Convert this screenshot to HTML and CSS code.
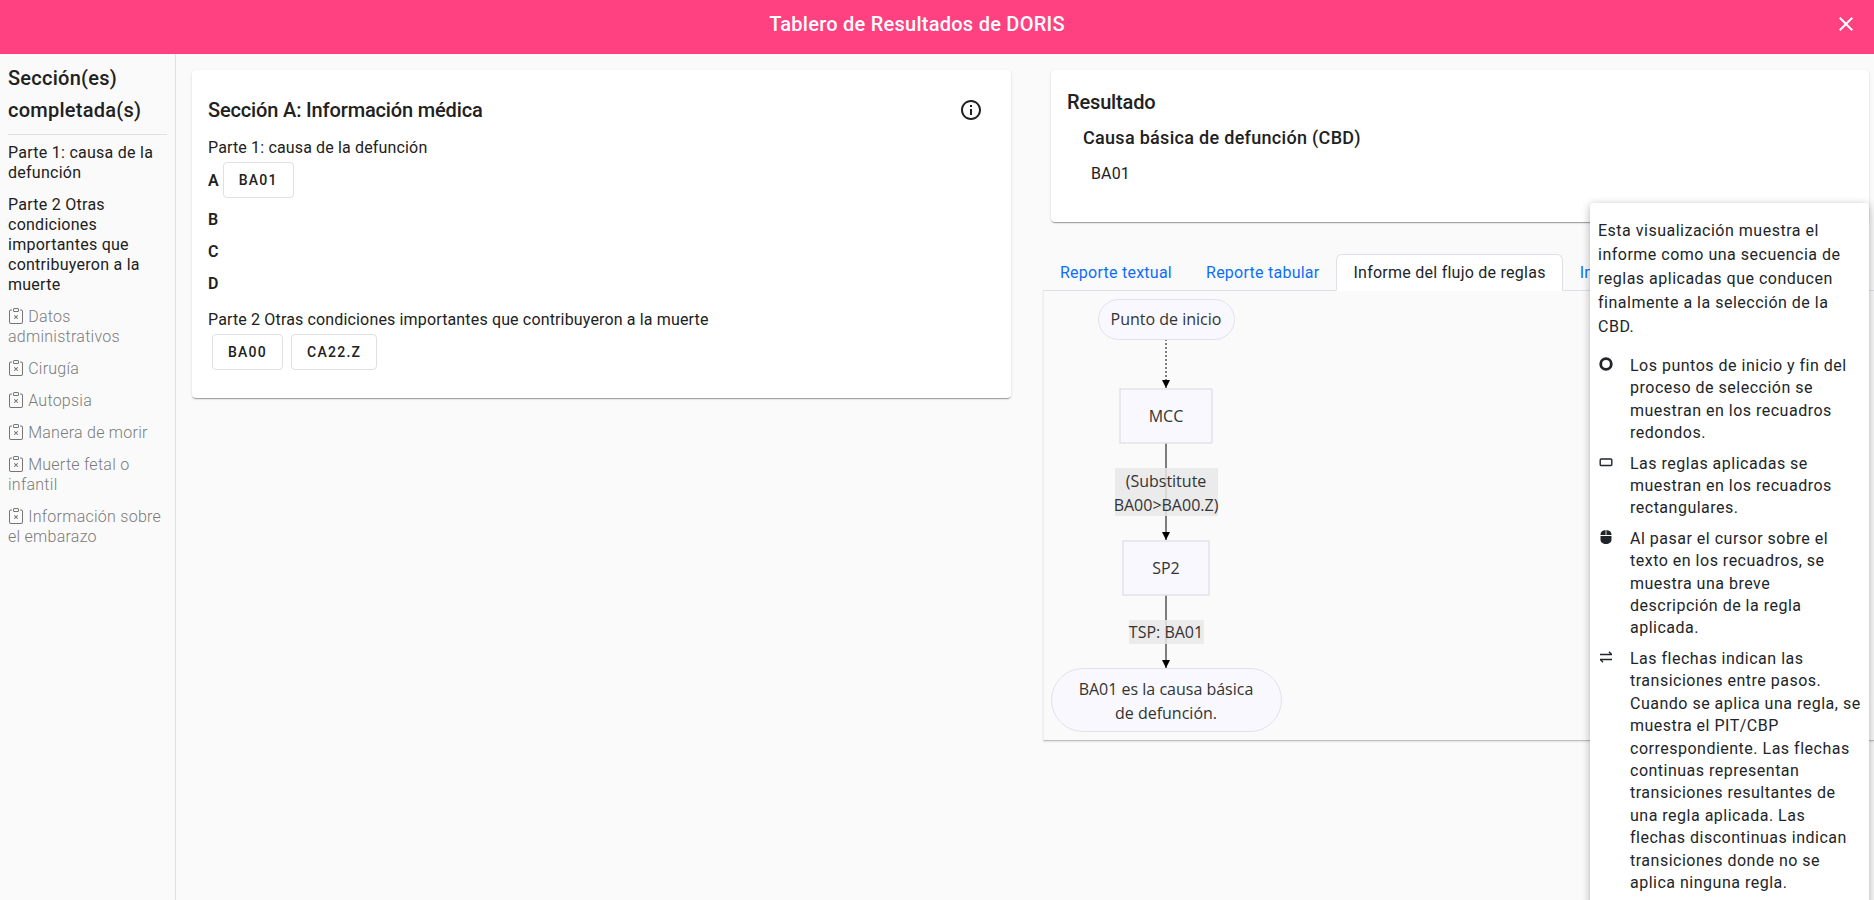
FILE: index.html
```html
<!DOCTYPE html>
<html lang="es">
<head>
  <meta charset="UTF-8">
  <title>Tablero de Resultados de DORIS</title>
  <link rel="stylesheet" href="styles.css">
</head>
<body>
  <!-- Top bar -->
  <header class="top-bar">
    <h1>Tablero de Resultados de DORIS</h1>
    <svg class="close-icon" viewBox="0 0 24 24" width="24" height="24"><path d="M19 6.41 17.59 5 12 10.59 6.41 5 5 6.41 10.59 12 5 17.59 6.41 19 12 13.41 17.59 19 19 17.59 13.41 12z"/></svg>
  </header>

  <div class="main-container">
    <!-- Sections list -->
    <aside class="sidebar">
      <h2>Sección(es) completada(s)</h2>
      <hr>
      <p class="side-item">Parte 1: causa de la defunción</p>
      <p class="side-item">Parte 2 Otras condiciones importantes que contribuyeron a la muerte</p>
      <p class="side-item missing"><svg class="clip" viewBox="0 0 16 16" width="16" height="16"><use href="#clipboard-x"/></svg> Datos administrativos</p>
      <p class="side-item missing"><svg class="clip" viewBox="0 0 16 16" width="16" height="16"><use href="#clipboard-x"/></svg> Cirugía</p>
      <p class="side-item missing"><svg class="clip" viewBox="0 0 16 16" width="16" height="16"><use href="#clipboard-x"/></svg> Autopsia</p>
      <p class="side-item missing"><svg class="clip" viewBox="0 0 16 16" width="16" height="16"><use href="#clipboard-x"/></svg> Manera de morir</p>
      <p class="side-item missing"><svg class="clip" viewBox="0 0 16 16" width="16" height="16"><use href="#clipboard-x"/></svg> Muerte fetal o infantil</p>
      <p class="side-item missing"><svg class="clip" viewBox="0 0 16 16" width="16" height="16"><use href="#clipboard-x"/></svg> Información sobre el embarazo</p>
    </aside>

    <main class="content">
      <!-- Left column -->
      <section class="card medical-card">
        <div class="card-head">
          <h3>Sección A: Información médica</h3>
          <svg class="info-icon" viewBox="0 0 24 24" width="24" height="24"><path d="M11 7h2v2h-2zm0 4h2v6h-2zm1-9C6.48 2 2 6.48 2 12s4.48 10 10 10 10-4.48 10-10S17.52 2 12 2zm0 18c-4.41 0-8-3.59-8-8s3.59-8 8-8 8 3.59 8 8-3.59 8-8 8z"/></svg>
        </div>
        <p class="part-title">Parte 1: causa de la defunción</p>
        <div class="cause-row first"><b>A</b><span class="chip">BA01</span></div>
        <div class="cause-row"><b>B</b></div>
        <div class="cause-row"><b>C</b></div>
        <div class="cause-row"><b>D</b></div>
        <p class="part-title second">Parte 2 Otras condiciones importantes que contribuyeron a la muerte</p>
        <div class="chip-row"><span class="chip">BA00</span><span class="chip">CA22.Z</span></div>
      </section>

      <!-- Right column -->
      <div class="result-col">
        <section class="card result-card">
          <h3>Resultado</h3>
          <h4>Causa básica de defunción (CBD)</h4>
          <p>BA01</p>
        </section>

        <nav class="tabs">
          <a class="tab">Reporte textual</a>
          <a class="tab">Reporte tabular</a>
          <a class="tab active">Informe del flujo de reglas</a>
          <a class="tab">Informe</a>
        </nav>

        <div class="flow-panel">
          <svg class="flow" viewBox="0 0 300 449" width="300" height="449">
            <defs>
              <marker id="arrow" viewBox="0 0 8 8" refX="8" refY="4" markerWidth="8" markerHeight="8" orient="auto"><path d="M0 0 8 4 0 8z" fill="#000"/></marker>
            </defs>
            <line class="edge dotted" x1="123" y1="48" x2="123" y2="97" marker-end="url(#arrow)"/>
            <line class="edge" x1="123" y1="152" x2="123" y2="249" marker-end="url(#arrow)"/>
            <line class="edge" x1="123" y1="304" x2="123" y2="377" marker-end="url(#arrow)"/>

            <rect class="node" x="55.5" y="8.5" width="136" height="40" rx="20"/>
            <text x="123" y="34">Punto de inicio</text>

            <rect class="node thick" x="77" y="98" width="92" height="54"/>
            <text x="123" y="131">MCC</text>

            <rect class="edge-label" x="72" y="177" width="103" height="48"/>
            <text x="123" y="196">(Substitute</text>
            <text x="123" y="220">BA00&gt;BA00.Z)</text>

            <rect class="node thick" x="80" y="250" width="86" height="54"/>
            <text x="123" y="283">SP2</text>

            <rect class="edge-label" x="86" y="329" width="75" height="24"/>
            <text x="123" y="347">TSP: BA01</text>

            <rect class="node" x="8.5" y="377.5" width="230" height="63" rx="31.5"/>
            <text x="123" y="404">BA01 es la causa básica</text>
            <text x="123" y="428">de defunción.</text>
          </svg>
        </div>
      </div>
    </main>

    <!-- Help popup for the flow report -->
    <div class="help-pop">
      <p class="help-intro">Esta visualización muestra el informe como una secuencia de reglas aplicadas que conducen finalmente a la selección de la CBD.</p>
      <ul class="help-list">
        <li>
          <svg viewBox="0 0 16 16" width="16" height="16"><circle cx="8" cy="8" r="5.3" fill="none" stroke="#212529" stroke-width="2.8"/></svg>
          <span>Los puntos de inicio y fin del proceso de selección se muestran en los recuadros redondos.</span>
        </li>
        <li>
          <svg viewBox="0 0 16 16" width="16" height="16"><rect x="2.2" y="5" width="11.6" height="6.500" rx="1" fill="none" stroke="#212529" stroke-width="1.4"/></svg>
          <span>Las reglas aplicadas se muestran en los recuadros rectangulares.</span>
        </li>
        <li>
          <svg viewBox="0 0 16 16" width="16" height="16"><path d="M7.6 1C4.6 1.2 2.5 2.9 2.5 5.6v.4h5.1zM8.4 1v5h5.1v-.4C13.500 2.900 11.400 1.200 8.400 1zM2.500 7v3.500C2.500 13.300 4.900 15 8 15s5.500-1.700 5.500-4.500V7z" fill="#212529"/></svg>
          <span>Al pasar el cursor sobre el texto en los recuadros, se muestra una breve descripción de la regla aplicada.</span>
        </li>
        <li>
          <svg viewBox="0 0 16 16" width="16" height="16"><path d="M2 5.500h12M11 2.800l2.700 2.700M14 10.500H2M5 13.200 2.300 10.500" fill="none" stroke="#212529" stroke-width="1.400"/></svg>
          <span>Las flechas indican las transiciones entre pasos. Cuando se aplica una regla, se muestra el PIT/CBP correspondiente. Las flechas continuas representan transiciones resultantes de una regla aplicada. Las flechas discontinuas indican transiciones donde no se aplica ninguna regla.</span>
        </li>
      </ul>
    </div>
  </div>

  <!-- Shared clipboard icon -->
  <svg class="icon-defs" width="0" height="0">
    <symbol id="clipboard-x" viewBox="0 0 16 16">
      <path fill-rule="evenodd" d="M6.146 7.146a.5.5 0 0 1 .708 0L8 8.293l1.146-1.147a.5.5 0 1 1 .708.708L8.707 9l1.147 1.146a.5.5 0 0 1-.708.708L8 9.707l-1.146 1.147a.5.5 0 0 1-.708-.708L7.293 9 6.146 7.854a.5.5 0 0 1 0-.708z"/>
      <path d="M4 1.5H3a2 2 0 0 0-2 2V14a2 2 0 0 0 2 2h10a2 2 0 0 0 2-2V3.500a2 2 0 0 0-2-2h-1v1h1a1 1 0 0 1 1 1V14a1 1 0 0 1-1 1H3a1 1 0 0 1-1-1V3.500a1 1 0 0 1 1-1h1v-1z"/>
      <path d="M9.500 1a.5.5 0 0 1 .5.5v1a.5.5 0 0 1-.5.5h-3a.5.5 0 0 1-.5-.5v-1a.5.5 0 0 1 .5-.5h3zm-3-1A1.500 1.500 0 0 0 5 1.500v1A1.500 1.500 0 0 0 6.500 4h3A1.500 1.500 0 0 0 11 2.500v-1A1.500 1.500 0 0 0 9.500 0h-3z"/>
    </symbol>
  </svg>
</body>
</html>
```

FILE: styles.css
```css
/* Global reset */
* {
  margin: 0;
  padding: 0;
  box-sizing: border-box;
}

body {
  font-family: 'Roboto', sans-serif;
  font-size: 16px;
  color: #212121;
  background-color: #fafafa;
  height: 100vh;
  overflow: hidden;
  display: flex;
  flex-direction: column;
}

/* Top bar */
.top-bar {
  height: 54px;
  flex-shrink: 0;
  background-color: #ff4081;
  display: flex;
  align-items: center;
  padding: 0 16px 6px 0;
}

.top-bar h1 {
  flex: 1;
  text-align: center;
  color: white;
  font-size: 20px;
  font-weight: 500;
  letter-spacing: 0.25px;
}

.close-icon {
  fill: white;
}

/* Main container */
.main-container {
  flex: 1;
  display: flex;
  position: relative;
  min-height: 0;
}

/* Sidebar */
.sidebar {
  width: 176px;
  flex-shrink: 0;
  padding: 8px;
  border-right: 1px solid #e0e0e0;
}

.sidebar h2 {
  font-size: 20px;
  font-weight: 500;
  line-height: 32px;
  letter-spacing: 0.25px;
}

.sidebar hr {
  border: none;
  border-top: 1px solid #e0e0e0;
  margin: 8px 0;
}

.side-item {
  font-size: 16px;
  line-height: 20px;
  letter-spacing: 0.26px;
  margin-bottom: 12px;
}

.side-item.missing {
  color: #7a7a7a;
  font-weight: 300;
}

.clip {
  fill: #757575;
  vertical-align: -2px;
}

/* Cards */
.content {
  flex: 1;
  min-width: 0;
  display: grid;
  grid-template-columns: 819px 818px;
  column-gap: 40px;
  align-items: start;
  padding: 16px 5px 0 16px;
}

.card {
  background-color: white;
  border-radius: 4px;
  box-shadow: 0 2px 1px -1px rgba(0, 0, 0, 0.2), 0 1px 1px 0 rgba(0, 0, 0, 0.14), 0 1px 3px 0 rgba(0, 0, 0, 0.12);
  padding: 0 16px;
}

.card h3 {
  font-size: 20px;
  font-weight: 500;
  letter-spacing: -0.15px;
}

.medical-card {
  height: 328px;
  padding-top: 20px;
}

.card-head {
  height: 40px;
  display: flex;
  align-items: center;
  justify-content: space-between;
  padding-right: 12px;
}

.info-icon {
  fill: #212121;
}

.part-title {
  font-size: 16px;
  line-height: 20px;
  letter-spacing: 0.15px;
  margin-top: 8px;
}

.part-title.second {
  margin-top: 11px;
}

.cause-row {
  display: flex;
  align-items: center;
  height: 32px;
}

.cause-row b {
  font-weight: 600;
}

.cause-row.first {
  height: 44px;
  margin-bottom: 1px;
}

.chip-row {
  display: flex;
}

.chip {
  display: inline-block;
  height: 36px;
  line-height: 34px;
  margin: 4px;
  padding: 0 15px;
  min-width: 71px;
  text-align: center;
  border: 1px solid #e0e0e0;
  border-radius: 4px;
  background-color: white;
  font-size: 14px;
  font-weight: 500;
  letter-spacing: 1.25px;
}

/* Result card */
.result-card {
  height: 152px;
  padding-top: 20px;
}

.result-card h3 {
  line-height: 24px;
}

.result-card h4 {
  font-size: 18px;
  font-weight: 500;
  line-height: 24px;
  margin: 12px 0 0 16px;
  letter-spacing: 0.3px;
}

.result-card p {
  line-height: 24px;
  margin: 12px 0 0 24px;
  letter-spacing: 0.15px;
}

/* Tabs */
.result-col {
  min-width: 0;
}

.tabs {
  display: flex;
  height: 37px;
  margin: 32px -5px 0 -8px;
  border-bottom: 1px solid #dee2e6;
}

.tab {
  padding: 7px 16px;
  line-height: 22px;
  font-size: 16px;
  letter-spacing: 0.25px;
  color: #0d6efd;
  border: 1px solid transparent;
  border-radius: 6px 6px 0 0;
  height: 37px;
  white-space: nowrap;
}

.tab.active {
  color: #212529;
  background-color: white;
  border-color: #dee2e6 #dee2e6 white;
}

/* Flow diagram */
.flow-panel {
  height: 450px;
  margin: 0 -5px 0 -8px;
  border-left: 1px solid #eeeeee;
  border-bottom: 1px solid #bdbdbd;
  background-color: #fafafa;
  box-shadow: 0 1px 2px rgba(0, 0, 0, 0.1);
}

.flow {
  display: block;
  margin-left: -1px;
}

.flow text {
  font-family: 'Open Sans', sans-serif;
  font-size: 16px;
  fill: #333333;
  text-anchor: middle;
}

.node {
  fill: #f8f8fe;
  stroke: #e2e2ea;
}

.node.thick {
  stroke-width: 1.5;
}

.edge {
  stroke: #000;
  stroke-width: 1;
}

.edge.dotted {
  stroke-dasharray: 2 2;
}

.edge-label {
  fill: #e8e8e8;
  fill-opacity: 0.85;
}

/* Help popup */
.help-pop {
  position: absolute;
  left: 1590px;
  top: 149px;
  width: 279px;
  height: 800px;
  padding: 16px 8px;
  background-color: white;
  border-radius: 4px;
  box-shadow: 0 2px 8px rgba(0, 0, 0, 0.3);
  color: #212529;
  letter-spacing: 0.5px;
}

.help-intro {
  line-height: 24px;
  margin-bottom: 16px;
}

.help-list {
  list-style: none;
}

.help-list li {
  display: flex;
  gap: 16px;
  line-height: 22.400px;
  margin-bottom: 8px;
}

.help-list svg {
  flex-shrink: 0;
  margin-top: 1px;
}

.icon-defs {
  position: absolute;
}
```
